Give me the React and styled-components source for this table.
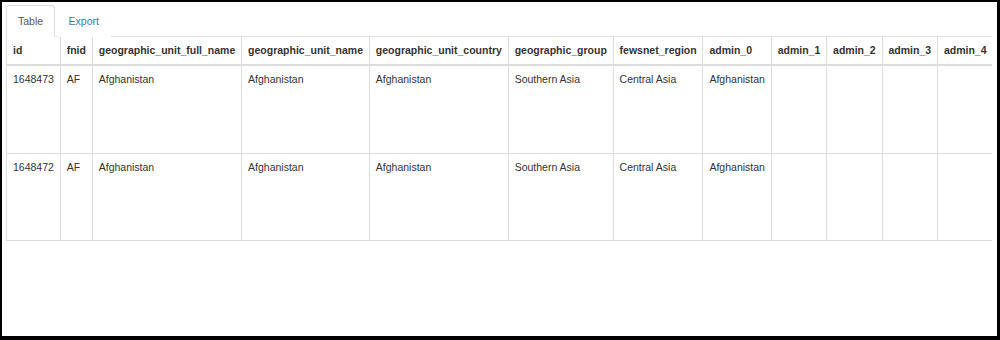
import React, { useState } from 'react';
import styled, { createGlobalStyle } from 'styled-components';

const GlobalStyle = createGlobalStyle`
  html, body {
    margin: 0;
    padding: 0;
    background: #000;
  }
  body {
    font-family: 'Liberation Sans', Arial, Helvetica, sans-serif;
    font-size: 10.5px;
    line-height: 15px;
    color: #333;
  }
`;

const Frame = styled.div`
  width: 1000px;
  height: 340px;
  box-sizing: border-box;
  padding: 2px 3px 4px 2px;
  background: #000;
`;

const Panel = styled.div`
  height: 100%;
  box-sizing: border-box;
  background: #fff;
  padding: 3px 5px 0 4px;
`;

const TabBar = styled.ul`
  display: flex;
  list-style: none;
  margin: 0;
  padding: 0;
  border-bottom: 1px solid #ddd;
`;

const Tab = styled.li`
  margin-bottom: -1px;
  margin-right: 1.5px;

  & > a {
    display: block;
    padding: 7.5px 11px 7.5px 11px;
    line-height: 15px;
    border: 1px solid ${(p) => (p.$active ? '#ddd' : 'transparent')};
    border-bottom-color: ${(p) => (p.$active ? '#fff' : 'transparent')};
    border-radius: 3px 3px 0 0;
    background: #fff;
    color: ${(p) => (p.$active ? '#555' : '#337ab7')};
    text-decoration: none;
    cursor: pointer;
  }
`;

const TableWrap = styled.div`
  width: 986px;
  overflow: hidden;
`;

const Grid = styled.table`
  border-collapse: collapse;
  border-spacing: 0;
  border: 1px solid #ddd;
  border-top: 0;
  white-space: nowrap;
  font-size: 10.5px;

  th,
  td {
    padding: 6px 5.8px 6px 6px;
    border: 1px solid #ddd;
    text-align: left;
    line-height: 15px;
  }

  th {
    font-weight: bold;
    vertical-align: bottom;
    border-top: 0;
    border-bottom: 2px solid #ddd;
  }

  td {
    vertical-align: top;
    height: 74.5px;
  }
`;

const columns = [
  'id',
  'fnid',
  'geographic_unit_full_name',
  'geographic_unit_name',
  'geographic_unit_country',
  'geographic_group',
  'fewsnet_region',
  'admin_0',
  'admin_1',
  'admin_2',
  'admin_3',
  'admin_4',
];

const rows = [
  ['1648473', 'AF', 'Afghanistan', 'Afghanistan', 'Afghanistan', 'Southern Asia', 'Central Asia', 'Afghanistan', '', '', '', ''],
  ['1648472', 'AF', 'Afghanistan', 'Afghanistan', 'Afghanistan', 'Southern Asia', 'Central Asia', 'Afghanistan', '', '', '', ''],
];

const App = () => {
  const [tab, setTab] = useState('table');

  return (
    <>
      <GlobalStyle />
      <Frame>
        <Panel>
          <TabBar>
            <Tab $active={tab === 'table'}>
              <a onClick={() => setTab('table')}>Table</a>
            </Tab>
            <Tab $active={tab === 'export'}>
              <a onClick={() => setTab('export')}>Export</a>
            </Tab>
          </TabBar>
          <TableWrap>
            <Grid>
              <thead>
                <tr>
                  {columns.map((c) => (
                    <th key={c}>{c}</th>
                  ))}
                </tr>
              </thead>
              <tbody>
                {rows.map((r) => (
                  <tr key={r[0]}>
                    {r.map((v, i) => (
                      <td key={i}>{v}</td>
                    ))}
                  </tr>
                ))}
              </tbody>
            </Grid>
          </TableWrap>
        </Panel>
      </Frame>
    </>
  );
};

export default App;
